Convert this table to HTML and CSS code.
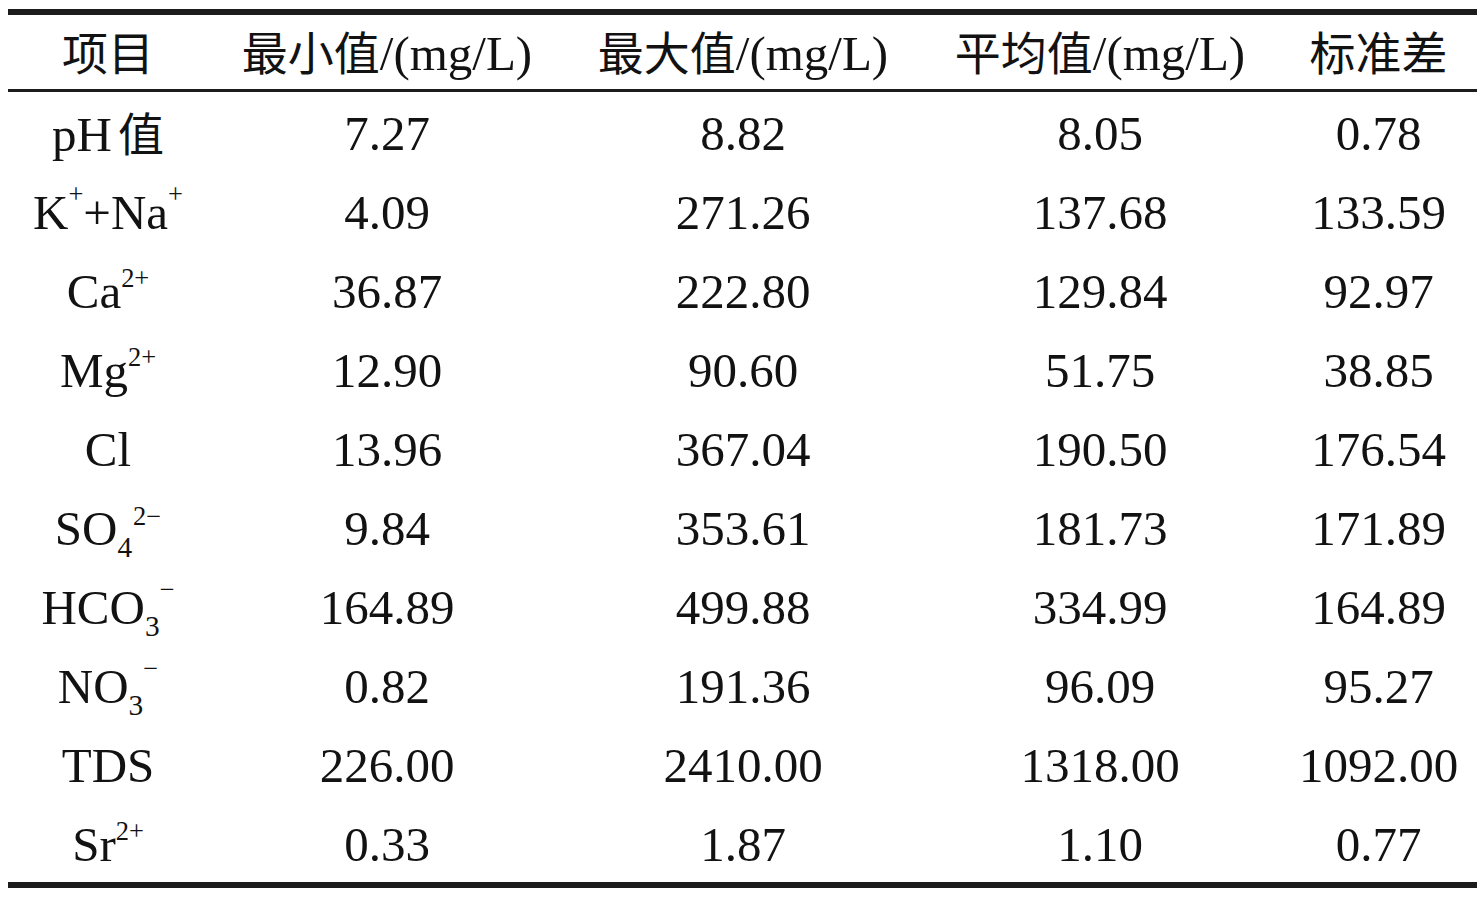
FILE: index.html
```html
<!DOCTYPE html>
<html lang="zh-CN">
<head>
<meta charset="utf-8">
<title>水化学参数统计</title>
<link rel="stylesheet" href="styles.css">
</head>
<body>
<div class="page">
<table class="stats">
  <colgroup>
    <col class="c1"><col class="c2"><col class="c3"><col class="c4"><col class="c5">
  </colgroup>
  <thead>
    <tr>
      <th><span class="zh">项目</span></th>
      <th><span class="zh">最小值</span>/(mg/L)</th>
      <th><span class="zh">最大值</span>/(mg/L)</th>
      <th><span class="zh">平均值</span>/(mg/L)</th>
      <th><span class="zh">标准差</span></th>
    </tr>
  </thead>
  <tbody>
    <tr><td>pH<span class="zh gap">值</span></td><td>7.27</td><td>8.82</td><td>8.05</td><td>0.78</td></tr>
    <tr><td>K<sup class="ion">+</sup>+Na<sup class="ion">+</sup></td><td>4.09</td><td>271.26</td><td>137.68</td><td>133.59</td></tr>
    <tr><td>Ca<sup>2+</sup></td><td>36.87</td><td>222.80</td><td>129.84</td><td>92.97</td></tr>
    <tr><td>Mg<sup>2+</sup></td><td>12.90</td><td>90.60</td><td>51.75</td><td>38.85</td></tr>
    <tr><td>Cl</td><td>13.96</td><td>367.04</td><td>190.50</td><td>176.54</td></tr>
    <tr><td>SO<sub>4</sub><sup class="after">2−</sup></td><td>9.84</td><td>353.61</td><td>181.73</td><td>171.89</td></tr>
    <tr><td>HCO<sub>3</sub><sup class="ion">−</sup></td><td>164.89</td><td>499.88</td><td>334.99</td><td>164.89</td></tr>
    <tr><td>NO<sub>3</sub><sup class="ion">−</sup></td><td>0.82</td><td>191.36</td><td>96.09</td><td>95.27</td></tr>
    <tr><td>TDS</td><td>226.00</td><td>2410.00</td><td>1318.00</td><td>1092.00</td></tr>
    <tr><td>Sr<sup>2+</sup></td><td>0.33</td><td>1.87</td><td>1.10</td><td>0.77</td></tr>
  </tbody>
</table>
</div>
</body>
</html>
```
FILE: styles.css
```css
html, body {
  margin: 0;
  padding: 0;
  background: #ffffff;
}

.page {
  padding: 9px 6px 0 8px;
}

.stats {
  border-collapse: separate;
  border-spacing: 0;
  table-layout: fixed;
  width: 1469px;
  font-family: "Liberation Serif", "Times New Roman", "Noto Sans CJK SC", serif;
  font-size: 49px;
  color: #121212;
  border-top: 6px solid #1c1c1c;
  border-bottom: 6px solid #1c1c1c;
}

.c1 { width: 200px; }
.c2 { width: 358px; }
.c3 { width: 354px; }
.c4 { width: 360px; }
.c5 { width: 197px; }

.stats th,
.stats td {
  padding: 0;
  text-align: center;
  vertical-align: middle;
  white-space: nowrap;
  line-height: 1;
  box-sizing: border-box;
}

.stats th {
  font-weight: normal;
  height: 77px;
  border-bottom: 3px solid #1c1c1c;
}

.stats td {
  height: 79px;
  padding-top: 3px;
}

.zh {
  font-family: "Noto Sans CJK SC", sans-serif;
  font-size: 46px;
  font-weight: 400;
}

.gap {
  margin-left: 6px;
}

.stats sup,
.stats sub {
  line-height: 0;
  position: relative;
  vertical-align: baseline;
}

.stats sup {
  font-size: 0.54em;
  top: -0.78em;
}

.stats sup.ion {
  font-size: 0.54em;
  top: -0.96em;
}

.stats sup.after {
  margin-left: 1px;
  top: -0.72em;
}

.stats sub {
  font-size: 0.6em;
  top: 0.41em;
}
```
